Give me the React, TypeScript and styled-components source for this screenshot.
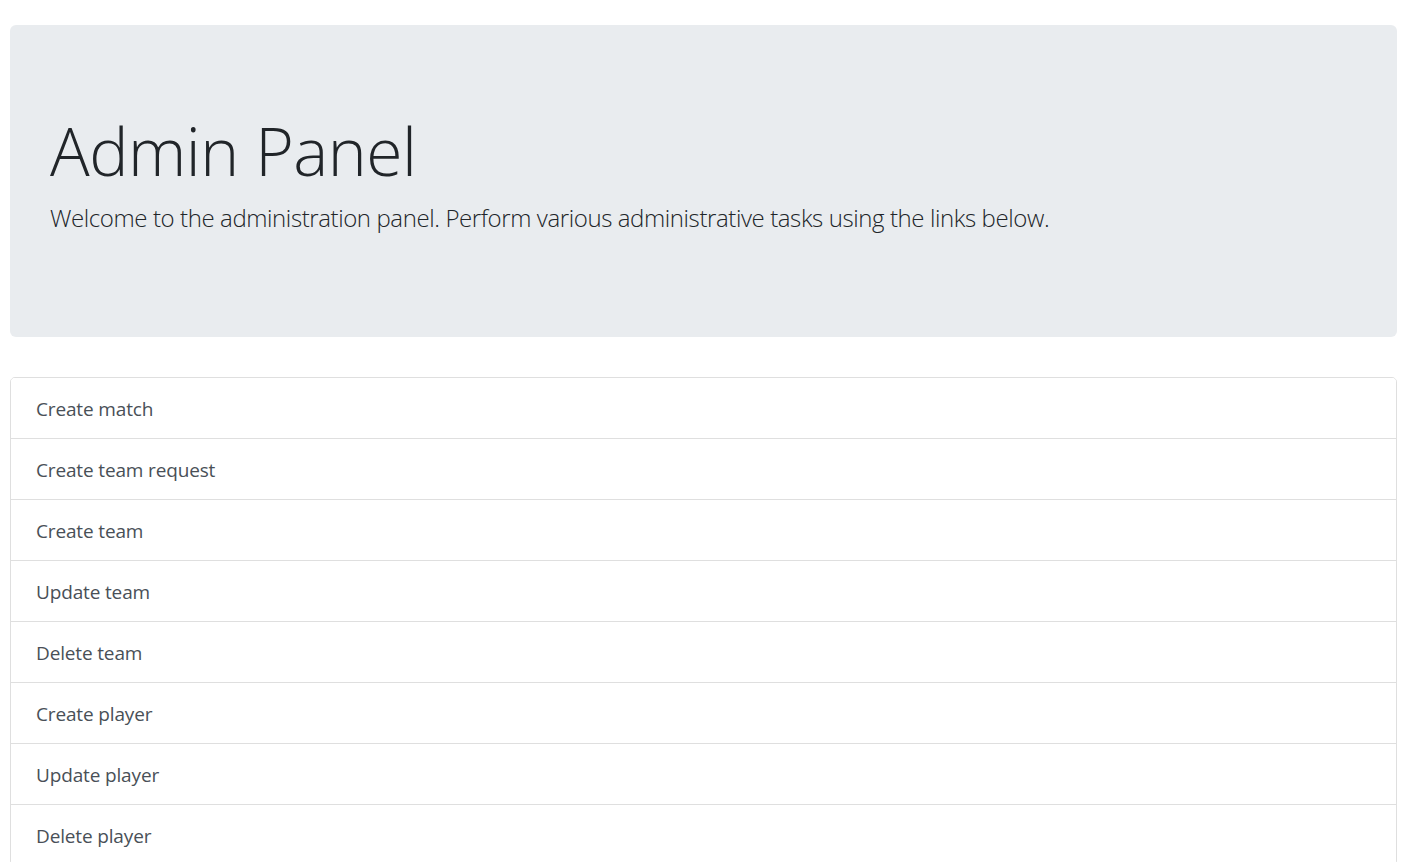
import React from 'react';
import styled, { createGlobalStyle } from 'styled-components';

const GlobalStyle = createGlobalStyle`
  html, body {
    margin: 0;
    padding: 0;
    background: #fff;
  }
  body {
    font-family: 'Open Sans', 'Noto Sans', Arial, sans-serif;
    font-size: 20px;
    line-height: 1.5;
    color: #212529;
  }
`;

const links = [
  'Create match',
  'Create team request',
  'Create team',
  'Update team',
  'Delete team',
  'Create player',
  'Update player',
  'Delete player',
];

export default function App() {
  return (
    <Page>
      <GlobalStyle />
      <Jumbotron>
        <Title>Admin Panel</Title>
        <Lead>
          Welcome to the administration panel. Perform various administrative tasks using the links
          below.
        </Lead>
      </Jumbotron>
      <ListGroup>
        {links.map((label) => (
          <ListItem key={label} href="#">
            {label}
          </ListItem>
        ))}
      </ListGroup>
    </Page>
  );
}

const Page = styled.div`
  padding: 25px 10px 10px;
`;

const Jumbotron = styled.div`
  background-color: #e9ecef;
  border-radius: 6px;
  padding: 80px 40px;
  margin-bottom: 40px;
  height: 312px;
  box-sizing: border-box;
`;

const Title = styled.h1`
  margin: 0 0 7px;
  padding-top: 3px;
  font-size: 66px;
  font-weight: 300;
  line-height: 84px;
  color: #212529;
  letter-spacing: -0.5px;
`;

const Lead = styled.p`
  margin: 0;
  font-size: 24px;
  font-weight: 300;
  line-height: 37.5px;
  color: #212529;
  letter-spacing: -0.4px;
`;

const ListGroup = styled.div`
  display: flex;
  flex-direction: column;
  border: 1px solid rgba(0, 0, 0, 0.125);
  border-radius: 5px;
  overflow: hidden;
`;

const ListItem = styled.a`
  display: block;
  padding: 16px 25px 14px;
  font-size: 19px;
  line-height: 30px;
  color: #495057;
  text-decoration: none;
  background: #fff;
  letter-spacing: -0.15px;
  & + & {
    border-top: 1px solid rgba(0, 0, 0, 0.125);
  }
`;
